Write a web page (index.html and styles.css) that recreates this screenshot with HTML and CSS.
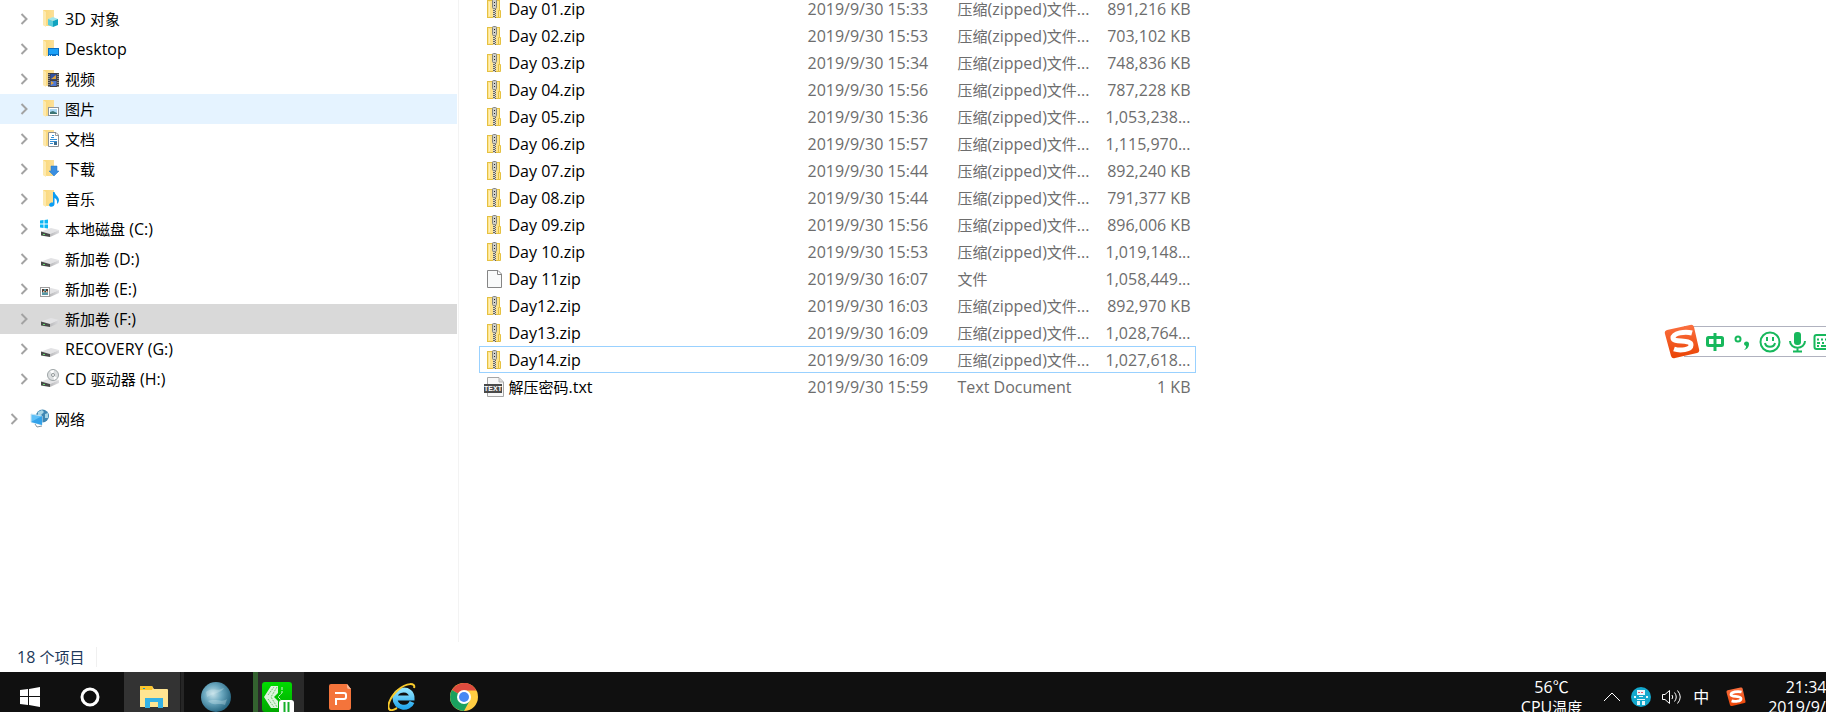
FILE: index.html
```
<!DOCTYPE html>
<html lang="zh-CN">
<head>
    <meta charset="UTF-8">
    <title>新加卷 (F:)</title>
    <link rel="stylesheet" href="styles.css">
</head>
<body>
    <!-- shared icons -->
    <svg class="defs" width="0" height="0">
        <defs>
            <linearGradient id="gFolder" x1="0" x2="1"><stop offset="0" stop-color="#fbd775"/><stop offset="1" stop-color="#fbe09a"/></linearGradient>
            <linearGradient id="gDisk" x1="0" x2="1"><stop offset="0" stop-color="#b9b9bb"/><stop offset="1" stop-color="#dcdcdf"/></linearGradient>
            <linearGradient id="gSogou" x1="0" y1="0" x2="0" y2="1"><stop offset="0" stop-color="#fb7040"/><stop offset="1" stop-color="#ea4405"/></linearGradient>
            <radialGradient id="gGlobe" cx="0.4" cy="0.4" r="0.6"><stop offset="0" stop-color="#c6e2ea"/><stop offset="0.5" stop-color="#6ba8bf"/><stop offset="1" stop-color="#2b6a85"/></radialGradient>
            <linearGradient id="gGreen" x1="0" y1="0" x2="0" y2="1"><stop offset="0" stop-color="#00dc00"/><stop offset="1" stop-color="#00a800"/></linearGradient>
            <linearGradient id="gIe" x1="0" y1="0" x2="0" y2="1"><stop offset="0" stop-color="#8fe3ff"/><stop offset="1" stop-color="#27a9ee"/></linearGradient>
        </defs>
        <symbol id="chevron" viewBox="0 0 8 12"><path d="M1.500 1 L6.500 6 L1.500 11" fill="none" stroke="#a3a3a3" stroke-width="2"/></symbol>
        <symbol id="folder" viewBox="0 0 20 20">
            <path d="M3 1 H14 V17 H7 L3 16 Z" fill="url(#gFolder)"/>
            <path d="M3 1 L6 3 V18 L3 16 Z" fill="#fde9ae"/>
        </symbol>
        <symbol id="cube" viewBox="0 0 20 20">
            <use href="#folder"/>
            <path d="M8 10 L13 8 L18 10 L13 12 Z" fill="#9fe6ee"/>
            <path d="M8 10 L13 12 V18 L8 16 Z" fill="#5accda"/>
            <path d="M13 12 L18 10 V16 L13 18 Z" fill="#10a3bf"/>
        </symbol>
        <symbol id="desktop" viewBox="0 0 20 20">
            <use href="#folder"/>
            <rect x="8" y="9" width="11" height="8" fill="#0a6fc2"/>
            <rect x="9" y="10" width="9" height="5" fill="#1ba1f8"/>
            <path d="M9 16.500h1M11 16.500h1M16 16.500h2" stroke="#d5efff"/>
        </symbol>
        <symbol id="video" viewBox="0 0 20 20">
            <use href="#folder"/>
            <rect x="8" y="4" width="11" height="14" fill="#45413f"/>
            <path d="M9 5 V18 M18 5 V18" stroke="#d8d5d0" stroke-dasharray="1 1"/>
            <rect x="10.500" y="5" width="6" height="5.500" fill="#3151a4"/>
            <rect x="10.500" y="12" width="6" height="5" fill="#4f79d3"/>
            <path d="M11 10 L16 6 V10 Z M11 12 L14 14 L11 16 Z" fill="#dfa23b"/>
        </symbol>
        <symbol id="picture" viewBox="0 0 20 20">
            <use href="#folder"/>
            <rect x="8.500" y="8.500" width="10" height="8" fill="#fff" stroke="#8d949a"/>
            <rect x="10" y="10" width="7" height="5" fill="#a9d7f5"/>
            <path d="M10 13 L13 12 L17 14 V15 H10 Z" fill="#3c7474"/>
        </symbol>
        <symbol id="doc" viewBox="0 0 20 20">
            <use href="#folder"/>
            <path d="M8.500 3.500 H16 L18.500 6 V17.500 H8.500 Z" fill="#fff" stroke="#8b8f93"/>
            <path d="M12 6.500h2M11 8.500h3M10 10.500h7M10 12.500h7M10 14.500h3M15 15h2" stroke="#358fd6"/>
            <path d="M15.500 4 V6.500 H18" fill="none" stroke="#9b9b9b"/>
            <rect x="14" y="13" width="3" height="3" fill="#3d6b8d"/>
        </symbol>
        <symbol id="download" viewBox="0 0 20 20">
            <use href="#folder"/>
            <path d="M11 7 H17 V12 H19 L14 17 L9 12 H11 Z" fill="#3a8ee0" stroke="#2676c4" stroke-width="0.500"/>
        </symbol>
        <symbol id="music" viewBox="0 0 20 20">
            <use href="#folder"/>
            <path d="M13 3 H14.500 C15 6 19 7.500 19 11 C19 13 18 14 17 15 C17.500 11.500 16.500 10 14.500 9 V15 C14.500 17 12 18.500 10 17.500 C8 16 9.500 13 13 13.500 Z" fill="#0c9df3"/>
        </symbol>
        <symbol id="disk" viewBox="0 0 20 20">
            <path d="M1 12.500 L11 9 L19 11 L10 15 Z" fill="#e3e3e5"/>
            <path d="M1 12.500 L10 15 V18 L1 16.500 Z" fill="#484a48"/>
            <path d="M10 15 L19 11 V14 L10 18 Z" fill="url(#gDisk)"/>
            <path d="M3 15.500 h2" stroke="#66d970"/>
        </symbol>
        <symbol id="diskC" viewBox="0 0 20 20">
            <use href="#disk"/>
            <path d="M0 1.500 L3.500 1 V4.500 H0 Z M4.500 1 L8 .5 V4.500 H4.500 Z M0 5.500 H3.500 V9 L0 8.500 Z M4.500 5.500 H8 V9.500 L4.500 9 Z" fill="#0bb6f4"/>
        </symbol>
        <symbol id="diskE" viewBox="0 0 20 20">
            <use href="#disk"/>
            <rect x="0.500" y="8.500" width="9" height="9" fill="#fff" stroke="#9d9d9d"/>
            <rect x="2" y="10" width="6" height="6" fill="#5a98a5"/>
            <path d="M2 10 h2 v2 h2 v-2 h2 v3 h-6 Z" fill="#513e35"/>
            <path d="M3 12h1.500v1.500h-1.500zM6 12h1.500v1.500h-1.500z" fill="#edc0a0"/>
        </symbol>
        <symbol id="cd" viewBox="0 0 20 20">
            <use href="#disk"/>
            <circle cx="13" cy="6" r="5.500" fill="#dcdfe0" stroke="#9ea5a7"/>
            <path d="M13 6 L10 2 L14 1 Z M13 6 L17 9 L14 11 Z" fill="#fff"/>
            <circle cx="13" cy="6" r="1.500" fill="#fff" stroke="#8e9597"/>
        </symbol>
        <symbol id="network" viewBox="0 0 20 20">
            <circle cx="12.500" cy="7" r="6.500" fill="#3f87b3"/>
            <path d="M8 3 L12 1 L14 3 L11 6 L8 6 Z M15 5 L18 4 L18 9 L15 9 Z" fill="#a9d6e6"/>
            <path d="M1 5 L12 7 V16 L1 13 Z" fill="#5fc0f7" stroke="#c9e6f5"/>
            <path d="M1 13 L12 7 V16 Z" fill="#33a2ea"/>
            <path d="M5 15 L7 18 L12 17" stroke="#8796a0" fill="none"/>
        </symbol>
        <symbol id="zip" viewBox="0 0 20 20">
            <rect x="3.500" y="1.500" width="12" height="17" fill="#ffe48c" stroke="#e5c142"/>
            <path d="M14.500 11.500 h2 v7 h-2 Z" fill="#ffe694" stroke="#e5c142"/>
            <path d="M5.500 17V3" stroke="#fff0b8"/>
            <path d="M10.500 9 V19" stroke="#d9d6c8" stroke-width="3"/>
            <path d="M10 9 V19" stroke="#66655f" stroke-width="2" stroke-dasharray="1 1"/>
            <path d="M11.500 10 V19" stroke="#66655f" stroke-dasharray="1 1"/>
            <rect x="8.500" y="0.500" width="4" height="9" rx="1" fill="#cfcfc8" stroke="#85857f"/>
            <path d="M10 3.500h1M10 6.500h1" stroke="#222"/>
        </symbol>
        <symbol id="file" viewBox="0 0 20 20">
            <path d="M3.500 1.500 H14 L17.500 5 V18.500 H3.500 Z" fill="#f9fafa" stroke="#858585"/>
            <path d="M13.500 2 V5.500 H17" fill="#fff" stroke="#858585"/>
        </symbol>
        <symbol id="txt" viewBox="0 0 20 20">
            <path d="M3.500 .5 H15 L19.500 5 V19.500 H3.500 Z" fill="#f8f8f8" stroke="#a5a5a5"/>
            <path d="M15 1 V5 H19" fill="#ddd" stroke="#b5b5b5"/>
            <rect x="0" y="7" width="18" height="9" fill="#4a4a4a"/>
            <text x="9" y="14" text-anchor="middle" font-family="Liberation Sans, sans-serif" font-size="7" font-weight="bold" fill="#fff">TEXT</text>
        </symbol>
        <symbol id="sogou" viewBox="0 0 36 36">
            <path d="M3 6 L26 1 Q29 0 30 3 L35 25 Q36 28 33 29 L11 34 Q8 35 7 32 L1 10 Q0 7 3 6 Z" fill="url(#gSogou)"/>
            <path d="M28 9 C21 7 9 9 9 14 C9 19 27 15 27 21 C27 26 16 27 10 25" fill="none" stroke="#fff" stroke-width="5"/>
        </symbol>
    </svg>

    <div class="explorer">
        <nav class="tree">
            <a class="item" href="#"><svg class="arrow"><use href="#chevron"/></svg><svg class="icon"><use href="#cube"/></svg><span>3D <span class="cn">对象</span></span></a>
            <a class="item" href="#"><svg class="arrow"><use href="#chevron"/></svg><svg class="icon"><use href="#desktop"/></svg><span>Desktop</span></a>
            <a class="item" href="#"><svg class="arrow"><use href="#chevron"/></svg><svg class="icon"><use href="#video"/></svg><span class="cn">视频</span></a>
            <a class="item hovered" href="#"><svg class="arrow"><use href="#chevron"/></svg><svg class="icon"><use href="#picture"/></svg><span class="cn">图片</span></a>
            <a class="item" href="#"><svg class="arrow"><use href="#chevron"/></svg><svg class="icon"><use href="#doc"/></svg><span class="cn">文档</span></a>
            <a class="item" href="#"><svg class="arrow"><use href="#chevron"/></svg><svg class="icon"><use href="#download"/></svg><span class="cn">下载</span></a>
            <a class="item" href="#"><svg class="arrow"><use href="#chevron"/></svg><svg class="icon"><use href="#music"/></svg><span class="cn">音乐</span></a>
            <a class="item" href="#"><svg class="arrow"><use href="#chevron"/></svg><svg class="icon"><use href="#diskC"/></svg><span><span class="cn">本地磁盘</span> (C:)</span></a>
            <a class="item" href="#"><svg class="arrow"><use href="#chevron"/></svg><svg class="icon"><use href="#disk"/></svg><span><span class="cn">新加卷</span> (D:)</span></a>
            <a class="item" href="#"><svg class="arrow"><use href="#chevron"/></svg><svg class="icon"><use href="#diskE"/></svg><span><span class="cn">新加卷</span> (E:)</span></a>
            <a class="item selected" href="#"><svg class="arrow"><use href="#chevron"/></svg><svg class="icon"><use href="#disk"/></svg><span><span class="cn">新加卷</span> (F:)</span></a>
            <a class="item" href="#"><svg class="arrow"><use href="#chevron"/></svg><svg class="icon"><use href="#disk"/></svg><span>RECOVERY (G:)</span></a>
            <a class="item" href="#"><svg class="arrow"><use href="#chevron"/></svg><svg class="icon"><use href="#cd"/></svg><span>CD <span class="cn">驱动器</span> (H:)</span></a>
            <a class="item root" href="#"><svg class="arrow"><use href="#chevron"/></svg><svg class="icon"><use href="#network"/></svg><span class="cn">网络</span></a>
        </nav>

        <main class="files">
            <table>
                <colgroup><col class="col-name"><col class="col-date"><col class="col-type"><col class="col-size"></colgroup>
                <tbody>
                    <tr><td><div class="name"><svg class="icon"><use href="#zip"/></svg>Day 01.zip</div></td><td>2019/9/30 15:33</td><td><span class="cn">压缩</span>(zipped)<span class="cn">文件</span>...</td><td>891,216 KB</td></tr>
                    <tr><td><div class="name"><svg class="icon"><use href="#zip"/></svg>Day 02.zip</div></td><td>2019/9/30 15:53</td><td><span class="cn">压缩</span>(zipped)<span class="cn">文件</span>...</td><td>703,102 KB</td></tr>
                    <tr><td><div class="name"><svg class="icon"><use href="#zip"/></svg>Day 03.zip</div></td><td>2019/9/30 15:34</td><td><span class="cn">压缩</span>(zipped)<span class="cn">文件</span>...</td><td>748,836 KB</td></tr>
                    <tr><td><div class="name"><svg class="icon"><use href="#zip"/></svg>Day 04.zip</div></td><td>2019/9/30 15:56</td><td><span class="cn">压缩</span>(zipped)<span class="cn">文件</span>...</td><td>787,228 KB</td></tr>
                    <tr><td><div class="name"><svg class="icon"><use href="#zip"/></svg>Day 05.zip</div></td><td>2019/9/30 15:36</td><td><span class="cn">压缩</span>(zipped)<span class="cn">文件</span>...</td><td>1,053,238...</td></tr>
                    <tr><td><div class="name"><svg class="icon"><use href="#zip"/></svg>Day 06.zip</div></td><td>2019/9/30 15:57</td><td><span class="cn">压缩</span>(zipped)<span class="cn">文件</span>...</td><td>1,115,970...</td></tr>
                    <tr><td><div class="name"><svg class="icon"><use href="#zip"/></svg>Day 07.zip</div></td><td>2019/9/30 15:44</td><td><span class="cn">压缩</span>(zipped)<span class="cn">文件</span>...</td><td>892,240 KB</td></tr>
                    <tr><td><div class="name"><svg class="icon"><use href="#zip"/></svg>Day 08.zip</div></td><td>2019/9/30 15:44</td><td><span class="cn">压缩</span>(zipped)<span class="cn">文件</span>...</td><td>791,377 KB</td></tr>
                    <tr><td><div class="name"><svg class="icon"><use href="#zip"/></svg>Day 09.zip</div></td><td>2019/9/30 15:56</td><td><span class="cn">压缩</span>(zipped)<span class="cn">文件</span>...</td><td>896,006 KB</td></tr>
                    <tr><td><div class="name"><svg class="icon"><use href="#zip"/></svg>Day 10.zip</div></td><td>2019/9/30 15:53</td><td><span class="cn">压缩</span>(zipped)<span class="cn">文件</span>...</td><td>1,019,148...</td></tr>
                    <tr><td><div class="name"><svg class="icon"><use href="#file"/></svg>Day 11zip</div></td><td>2019/9/30 16:07</td><td><span class="cn">文件</span></td><td>1,058,449...</td></tr>
                    <tr><td><div class="name"><svg class="icon"><use href="#zip"/></svg>Day12.zip</div></td><td>2019/9/30 16:03</td><td><span class="cn">压缩</span>(zipped)<span class="cn">文件</span>...</td><td>892,970 KB</td></tr>
                    <tr><td><div class="name"><svg class="icon"><use href="#zip"/></svg>Day13.zip</div></td><td>2019/9/30 16:09</td><td><span class="cn">压缩</span>(zipped)<span class="cn">文件</span>...</td><td>1,028,764...</td></tr>
                    <tr class="focused"><td><div class="name"><svg class="icon"><use href="#zip"/></svg>Day14.zip</div></td><td>2019/9/30 16:09</td><td><span class="cn">压缩</span>(zipped)<span class="cn">文件</span>...</td><td>1,027,618...</td></tr>
                    <tr><td><div class="name"><svg class="icon"><use href="#txt"/></svg><span><span class="cn">解压密码</span>.txt</span></div></td><td>2019/9/30 15:59</td><td>Text Document</td><td>1 KB</td></tr>
                </tbody>
            </table>
        </main>
    </div>

    <footer class="status"><span class="count">18 <span class="cn">个项目</span></span></footer>

    <!-- floating input method bar -->
    <div class="ime">
        <svg class="ime-logo" viewBox="0 0 36 36"><use href="#sogou"/></svg>
        <button aria-label="中文"><svg width="20" height="20" viewBox="0 0 20 20" fill="none" stroke="#17b85c" stroke-width="3"><rect x="2.500" y="5.500" width="15" height="8" rx="1"/><path d="M10 1 V19"/></svg></button>
        <button aria-label="标点"><svg width="20" height="20" viewBox="0 0 20 20"><circle cx="6" cy="7" r="2.500" fill="none" stroke="#17b85c" stroke-width="2"/><path d="M12 12 a2.500 2.500 0 1 1 5 0 C17 15 15 17.500 12 18 C14 16.500 14 15 14 14 A2.500 2.500 0 0 1 12 12 Z" fill="#17b85c"/></svg></button>
        <button aria-label="表情"><svg width="22" height="22" viewBox="0 0 22 22" fill="none" stroke="#17b85c" stroke-width="2"><circle cx="11" cy="11" r="9.500"/><path d="M8 6 V10 M14 6 V10 M6 12 C7 17 15 17 16 12"/></svg></button>
        <button aria-label="语音"><svg width="18" height="22" viewBox="0 0 18 22"><rect x="6" y="1" width="7" height="13" rx="3" fill="#17b85c"/><path d="M2 10 C2 19 17 19 17 10 M9.500 17 V20 M5 20.500 H14" fill="none" stroke="#17b85c" stroke-width="2"/></svg></button>
        <button aria-label="键盘"><svg width="22" height="18" viewBox="0 0 22 18" fill="none" stroke="#17b85c" stroke-width="2"><rect x="1.500" y="2" width="19" height="14" rx="2"/><path d="M4 6.500h2M8 6.500h2M12 6.500h2M4 10h3M9 10h2M13 10h2M4 13h2M8 13h8"/></svg></button>
    </div>

    <div class="taskbar">
        <button class="task" aria-label="开始"><svg width="20" height="20" viewBox="0 0 20 20" fill="#fff"><path d="M0 3 L8 2 V9 H0 Z M9 2 L20 0 V9 H9 Z M0 10 H8 V18 L0 17 Z M9 10 H20 V20 L9 18 Z"/></svg></button>
        <button class="task search" aria-label="搜索"><svg width="20" height="20" viewBox="0 0 20 20"><circle cx="10" cy="10" r="8" fill="none" stroke="#fff" stroke-width="3"/></svg></button>
        <button class="task open" aria-label="文件资源管理器"><svg width="28" height="24" viewBox="0 0 28 24"><path d="M0 2 Q0 1 1 1 H12 L14 4 H27 Q28 4 28 5 V22 H0 Z" fill="#ffe592"/><path d="M0 2 Q0 1 1 1 H12 L13 3 L12 5 H0 Z" fill="#fbc52d"/><path d="M3 3.500h2" stroke="#1c9bc7"/><path d="M5 23 V13 H23 V23 H18 V17 H10 V23 Z" fill="#35b2e5"/></svg></button>
        <button class="task" aria-label="浏览器"><svg width="30" height="30" viewBox="0 0 30 30"><circle cx="15" cy="15" r="15" fill="url(#gGlobe)"/><path d="M5 10 C11 5 15 10 23 6 C20 11 13 11 6 15 Z M7 19 C15 16 21 21 26 17 L24 23 C18 20 12 25 7 19 Z" fill="#d9eef3" opacity="0.3"/></svg></button>
        <button class="task running" aria-label="视频"><svg width="32" height="30" viewBox="0 0 32 30"><rect width="30" height="30" rx="3" fill="url(#gGreen)"/><path d="M2 15 L9 4 H16 V11 L12 15 L16 19 V26 H9 Z" fill="#dff4df"/><path d="M15 5 L9 15 L15 25 M6 13 L12 5 M6 17 L12 25" fill="none" stroke="#72c672" stroke-dasharray="2 1"/><path d="M20 5 V11 L16 15 L20 19 V25" fill="none" stroke="#d6f4d6" stroke-dasharray="3 1"/><rect x="17" y="18" width="15" height="15" rx="3" fill="#fff"/><path d="M22.500 20 V30 M26.500 20 V30" stroke="#16b02a" stroke-width="2"/></svg></button>
        <button class="task" aria-label="演示"><svg width="22" height="28" viewBox="0 0 22 28"><path d="M2 1 H18 L22 6 V25 Q22 27 20 27 H2 Q0 27 0 25 V3 Q0 1 2 1 Z" fill="#f4743b"/><path d="M18 1 L22 6 H20 Q18 6 18 4 Z" fill="#fab798"/><path d="M6 10 H15 Q17 10 17 12 V14 Q17 16 15 16 H7 V22" fill="none" stroke="#fff" stroke-width="2"/></svg></button>
        <button class="task" aria-label="Internet Explorer"><svg width="28" height="28" viewBox="0 0 28 28"><path d="M24 19 C21 27 7 26 7 15 C7 5 24 4 24 15 H9" fill="none" stroke="url(#gIe)" stroke-width="5"/><path d="M26 5 C28 0 19 -1 10 7 C2 14 -2 24 2 27 C4 28 7 26 9 25" fill="none" stroke="#f8ca2c" stroke-width="2"/></svg></button>
        <button class="task" aria-label="Chrome"><svg width="28" height="28" viewBox="0 0 28 28"><circle cx="14" cy="14" r="14" fill="#ffcd42"/><path d="M14 14 L1.900 7 A14 14 0 0 1 26.100 7 Z" fill="#dd4b3e"/><path d="M14 14 L1.900 7 A14 14 0 0 0 14 28 L20 17 Z" fill="#1aa15f"/><path d="M14 7 H26.100 L20 14 Z" fill="#ffcd42"/><path d="M14 0 A14 14 0 0 1 26.100 7.500 H14 Z" fill="#dd4b3e"/><circle cx="14" cy="14" r="7" fill="#fff"/><circle cx="14" cy="14" r="5" fill="#4688f4"/></svg></button>

        <div class="tray">
            <div class="readout cpu">56℃<br>CPU<span class="cn">温度</span></div>
            <button aria-label="显示隐藏的图标"><svg width="18" height="20" viewBox="0 0 18 20"><path d="M1 14 L9 6 L17 14" fill="none" stroke="#fff" stroke-width="1"/></svg></button>
            <button aria-label="助手"><svg width="20" height="20" viewBox="0 0 20 20"><circle cx="10" cy="10" r="10" fill="#13a8cd"/><path d="M6 3h8v5h-8z M3 9h2v2h-2z M8 9h4v1h-4z M15 9h2v2h-2z M6 12h8v1h-8z M6 14h3v4h-3z M11 14h3v4h-3z" fill="#e5f6fa"/><path d="M7 5.500h6" stroke="#e8576e" stroke-dasharray="2 1"/></svg></button>
            <button aria-label="音量"><svg width="22" height="20" viewBox="0 0 22 20" fill="none" stroke="#fff"><path d="M1.500 7.500 H4 L8.500 3.500 V16.500 L4 12.500 H1.500 Z M11 8 Q12.500 10 11 12 M13.500 5.500 Q17 10 13.500 14.500 M16.500 3.500 Q22 10 16.500 16.500"/></svg></button>
            <button class="lang">中</button>
            <button aria-label="搜狗输入法"><svg width="20" height="20" viewBox="0 0 36 36"><use href="#sogou"/></svg></button>
            <div class="readout clock">21:34<br>2019/9/30</div>
        </div>
    </div>
</body>
</html>
```
FILE: styles.css
```
* {
    box-sizing: border-box;
}
body {
    margin: 0;
    height: 100vh;
    display: flex;
    flex-direction: column;
    overflow: hidden;
    position: relative;
    background: #fff;
    color: #000;
    font-family: "Open Sans", "Noto Sans CJK SC", sans-serif;
    font-size: 16px;
    line-height: 20px;
}
.defs {
    position: absolute;
}
/* Chinese runs sit a little smaller beside the latin text */
.cn {
    font-size: 15px;
}
button {
    border: none;
    padding: 0;
    background: none;
    color: inherit;
    font: inherit;
    display: flex;
    align-items: center;
    justify-content: center;
}
svg {
    display: block;
    flex: none;
}
.icon {
    width: 20px;
    height: 20px;
}

.explorer {
    flex: 1;
    min-height: 0;
    display: flex;
}

/* folder tree */
.tree {
    width: 25%;
    padding-top: 4px;
    flex: none;
}
.item {
    display: flex;
    align-items: center;
    height: 30px;
    padding-left: 20px;
    gap: 5px;
    color: #000;
    text-decoration: none;
    white-space: nowrap;
}
.arrow {
    width: 8px;
    height: 12px;
    margin-right: 7px;
}
.hovered {
    background: #e5f3ff;
}
.selected {
    background: #d9d9d9;
}
.root {
    margin-top: 10px;
    padding-left: 10px;
}

/* file list, scrolled a few pixels down */
.files {
    flex: 1;
    margin-left: 1px;
    padding-left: 20px;
    border-left: 1px solid #f3f3f3;
    overflow: hidden;
}
table {
    width: 717px;
    margin-top: -5px;
    table-layout: fixed;
    border-collapse: collapse;
}
.col-name {
    width: 329px;
}
.col-date {
    width: 150px;
}
.col-type {
    width: 145px;
}
td {
    height: 27px;
    padding: 0;
    color: #6d6d6d;
    white-space: nowrap;
}
td:first-child {
    color: #000;
}
td:last-child {
    padding-right: 5px;
    text-align: right;
}
.name {
    display: flex;
    align-items: center;
    gap: 5px;
    padding-left: 5px;
}
.focused {
    outline: 1px solid #99d1ff;
    outline-offset: -1px;
}

.status {
    height: 30px;
    padding-left: 17px;
    display: flex;
    align-items: center;
    color: #1e395b;
}
.count {
    padding-right: 12px;
    border-right: 1px solid #f0f0f0;
}

/* input method bar, the logo hangs over its left end */
.ime {
    position: absolute;
    top: 326px;
    right: -10px;
    height: 31px;
    display: flex;
    align-items: center;
    gap: 7px;
    background: #fff;
    border: 1px solid #b0b2bf;
    border-left: none;
}
.ime-logo {
    width: 36px;
    height: 36px;
    margin-left: -20px;
    margin-right: -2px;
}

/* taskbar runs past the bottom edge */
.taskbar {
    flex: none;
    height: 50px;
    margin-bottom: -10px;
    display: flex;
    gap: 2px;
    background: #101010;
    color: #fff;
}
.task {
    width: 60px;
    height: 50px;
}
.search {
    width: 56px;
    margin-right: 4px;
}
.open {
    background: linear-gradient(to right, #333 56px, #181818 56px, #181818 57px, #262626 57px);
}
.running {
    background: linear-gradient(to right, transparent 5px, #33622f 5px, #33622f 10px, #2a2a2a 10px, #2a2a2a 56px, transparent 56px);
}
.tray {
    margin-left: auto;
    margin-right: -18px;
    display: flex;
    align-items: center;
    gap: 10px;
}
.readout {
    text-align: center;
}
.cpu {
    margin-right: 11px;
}
.lang {
    margin-right: 7px;
}
.clock {
    margin-left: 12px;
}
```
